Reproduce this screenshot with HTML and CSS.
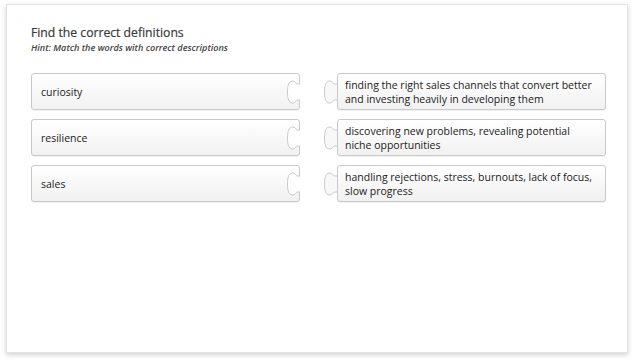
FILE: index.html
```html
<!DOCTYPE html>
<html>
<head>
<meta charset="utf-8">
<link rel="stylesheet" href="styles.css">
</head>
<body>
<div class="panel">
  <h1 class="title">Find the correct definitions</h1>
  <p class="hint">Hint: Match the words with correct descriptions</p>
  <div class="board">
    <div class="piece word">curiosity
      <svg class="notch" width="14" height="26" viewBox="0 0 14 26"><path d="M14,5 L11.5,5 C9.5,5 10,2 6.5,2 C3,2 1.5,6 1.5,13 C1.5,20 3,24 6.5,24 C10,24 9.5,21 11.5,21 L14,21"/></svg>
    </div>
    <div class="piece def">finding the right sales channels that convert better and investing heavily in developing them
      <svg class="tab" width="14" height="26" viewBox="0 0 14 26"><path d="M14,5 L11.5,5 C9.5,5 10,2 6.5,2 C3,2 1.5,6 1.5,13 C1.5,20 3,24 6.5,24 C10,24 9.5,21 11.5,21 L14,21"/></svg>
    </div>
    <div class="piece word">resilience
      <svg class="notch" width="14" height="26" viewBox="0 0 14 26"><path d="M14,5 L11.5,5 C9.5,5 10,2 6.5,2 C3,2 1.5,6 1.5,13 C1.5,20 3,24 6.5,24 C10,24 9.5,21 11.5,21 L14,21"/></svg>
    </div>
    <div class="piece def">discovering new problems, revealing potential niche opportunities
      <svg class="tab" width="14" height="26" viewBox="0 0 14 26"><path d="M14,5 L11.5,5 C9.5,5 10,2 6.5,2 C3,2 1.5,6 1.5,13 C1.5,20 3,24 6.5,24 C10,24 9.5,21 11.5,21 L14,21"/></svg>
    </div>
    <div class="piece word">sales
      <svg class="notch" width="14" height="26" viewBox="0 0 14 26"><path d="M14,5 L11.5,5 C9.5,5 10,2 6.5,2 C3,2 1.5,6 1.5,13 C1.5,20 3,24 6.5,24 C10,24 9.5,21 11.5,21 L14,21"/></svg>
    </div>
    <div class="piece def">handling rejections, stress, burnouts, lack of focus, slow progress
      <svg class="tab" width="14" height="26" viewBox="0 0 14 26"><path d="M14,5 L11.5,5 C9.5,5 10,2 6.5,2 C3,2 1.5,6 1.5,13 C1.5,20 3,24 6.5,24 C10,24 9.5,21 11.5,21 L14,21"/></svg>
    </div>
  </div>
</div>
</body>
</html>
```
FILE: styles.css
```css
html, body {
  margin: 0;
  background: #ffffff;
}
body {
  padding: 4px 8px 11px 6px;
  font-family: "Open Sans", "Noto Sans", sans-serif;
  color: #333;
}
.panel {
  box-sizing: border-box;
  height: 349px;
  background: #fff;
  border: 1px solid #e4e4e4;
  box-shadow: 0 2px 5px rgba(0,0,0,0.18);
  padding: 20px 22px 0 24px;
}
.title {
  margin: 0;
  font-size: 12.2px;
  line-height: 16px;
  font-weight: 400;
  color: #3a3a3a;
  -webkit-text-stroke: 0.2px #3a3a3a;
}
.hint {
  margin: 1px 0 0;
  font-size: 9.1px;
  line-height: 12px;
  font-style: italic;
  font-weight: 600;
  color: #444;
}
.board {
  margin-top: 19px;
  display: grid;
  grid-template-columns: 269px 269px;
  column-gap: 37px;
  row-gap: 9px;
}
.piece {
  position: relative;
  box-sizing: border-box;
  height: 37px;
  display: flex;
  align-items: center;
  border: 1px solid #c9c9c9;
  border-radius: 3px;
  background: linear-gradient(#ffffff, #f1f1f1);
  box-shadow: 0 1px 1px rgba(0,0,0,0.06);
  font-size: 10.5px;
  line-height: 14px;
  color: #222;
}
.word {
  padding: 0 9px;
}
.def {
  padding: 0 7px;
}
.notch, .tab {
  position: absolute;
  top: 5px;
  overflow: visible;
}
.notch {
  right: -1px;
}
.notch path {
  fill: #ffffff;
  stroke: #c9c9c9;
  stroke-width: 1;
}
.tab {
  left: -15px;
}
.tab path {
  fill: #f8f8f8;
  stroke: #c9c9c9;
  stroke-width: 1;
}
```
